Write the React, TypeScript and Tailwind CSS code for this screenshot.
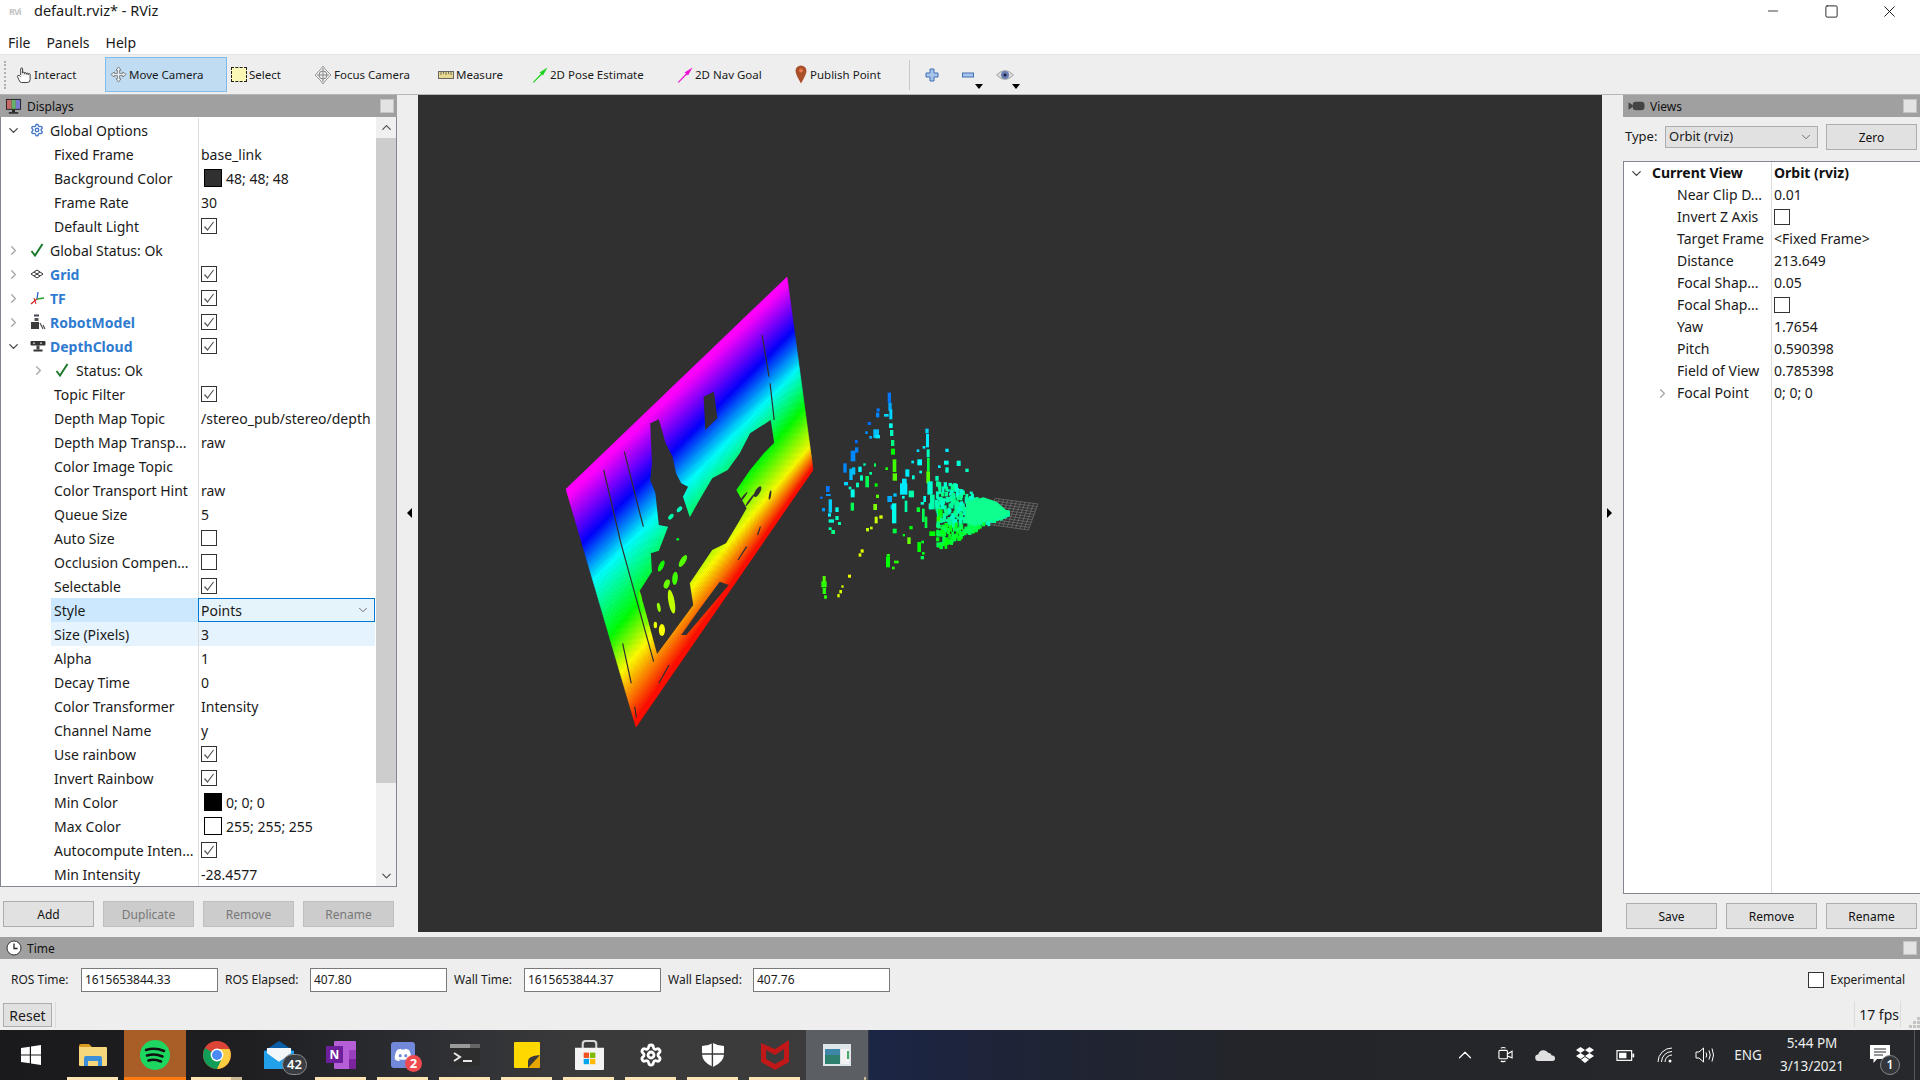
import React from 'react';
import { Settings, Minus, Square, X, ChevronUp, ChevronDown, ChevronRight } from 'lucide-react';
import { FaDiscord } from 'react-icons/fa';

type TreeRow = {
    label: string;
    value?: string;
    check?: boolean;
    swatch?: string;
    expand?: 'open' | 'closed';
    icon?: React.ReactNode;
    blue?: boolean;
    nested?: boolean;
    state?: 'style' | 'size';
};

const Chevron = ({ open }: { open: boolean }) =>
    open ? (
        <ChevronDown className="w-[15px] h-[15px] text-[#444]" strokeWidth={2} />
    ) : (
        <ChevronRight className="w-[15px] h-[15px] text-[#a6a6a6]" strokeWidth={2} />
    );

const StatusTick = () => (
    <svg viewBox="0 0 14 14" className="w-[14px] h-[14px]">
        <path d="M1.5 8 L5 12.5 L12.5 1" fill="none" stroke="#1d7a2c" strokeWidth="2" />
    </svg>
);

const GridIcon = () => (
    <svg viewBox="0 0 14 14" className="w-[14px] h-[14px]">
        <path d="M1 7 L7 3 L13 7 L7 11 Z M4 5 L10 9 M10 5 L4 9" fill="none" stroke="#333" strokeWidth="1" />
    </svg>
);

const TfIcon = () => (
    <svg viewBox="0 0 16 16" className="w-[16px] h-[16px]">
        <path d="M7 9 L8 2" stroke="#2a5fd0" strokeWidth="1.3" />
        <path d="M7 9 L14 8" stroke="#27a02a" strokeWidth="1.3" />
        <path d="M7 9 L1 14" stroke="#d02a2a" strokeWidth="1.3" />
        <path d="M4 8 L6 14" stroke="#d02a2a" strokeWidth="1" />
    </svg>
);

const RobotIcon = () => (
    <svg viewBox="0 0 16 16" className="w-[16px] h-[16px]">
        <rect x="4" y="0.5" width="5" height="2" fill="#445" />
        <rect x="4.5" y="4" width="4" height="3" fill="#555" />
        <rect x="1" y="8" width="8" height="7" fill="#3d3d3d" />
        <path d="M10 9 L13 15 M13 11 L15 15" stroke="#555" strokeWidth="1.2" />
    </svg>
);

const DepthIcon = () => (
    <svg viewBox="0 0 16 14" className="w-[16px] h-[14px]">
        <rect x="0.5" y="2" width="15" height="4.5" rx="1" fill="#333" />
        <circle cx="4" cy="4.2" r="1" fill="#bbb" />
        <circle cx="11" cy="4.2" r="1" fill="#bbb" />
        <rect x="6.5" y="6.5" width="3" height="4" fill="#444" />
        <rect x="3.5" y="10.5" width="9" height="2" fill="#333" />
    </svg>
);

const displayRows: TreeRow[] = [
    { label: 'Global Options', expand: 'open', icon: <Settings className="w-[14px] h-[14px] text-[#4a78c8]" strokeWidth={2.4} /> },
    { label: 'Fixed Frame', value: 'base_link' },
    { label: 'Background Color', value: '48; 48; 48', swatch: '#303030' },
    { label: 'Frame Rate', value: '30' },
    { label: 'Default Light', check: true },
    { label: 'Global Status: Ok', expand: 'closed', icon: <StatusTick /> },
    { label: 'Grid', expand: 'closed', icon: <GridIcon />, blue: true, check: true },
    { label: 'TF', expand: 'closed', icon: <TfIcon />, blue: true, check: true },
    { label: 'RobotModel', expand: 'closed', icon: <RobotIcon />, blue: true, check: true },
    { label: 'DepthCloud', expand: 'open', icon: <DepthIcon />, blue: true, check: true },
    { label: 'Status: Ok', nested: true, expand: 'closed', icon: <StatusTick /> },
    { label: 'Topic Filter', check: true },
    { label: 'Depth Map Topic', value: '/stereo_pub/stereo/depth' },
    { label: 'Depth Map Transp...', value: 'raw' },
    { label: 'Color Image Topic' },
    { label: 'Color Transport Hint', value: 'raw' },
    { label: 'Queue Size', value: '5' },
    { label: 'Auto Size', check: false },
    { label: 'Occlusion Compen...', check: false },
    { label: 'Selectable', check: true },
    { label: 'Style', value: 'Points', state: 'style' },
    { label: 'Size (Pixels)', value: '3', state: 'size' },
    { label: 'Alpha', value: '1' },
    { label: 'Decay Time', value: '0' },
    { label: 'Color Transformer', value: 'Intensity' },
    { label: 'Channel Name', value: 'y' },
    { label: 'Use rainbow', check: true },
    { label: 'Invert Rainbow', check: true },
    { label: 'Min Color', value: '0; 0; 0', swatch: '#000000' },
    { label: 'Max Color', value: '255; 255; 255', swatch: '#ffffff' },
    { label: 'Autocompute Inten...', check: true },
    { label: 'Min Intensity', value: '-28.4577' },
];

const viewRows: TreeRow[] = [
    { label: 'Near Clip D...', value: '0.01' },
    { label: 'Invert Z Axis', check: false },
    { label: 'Target Frame', value: '<Fixed Frame>' },
    { label: 'Distance', value: '213.649' },
    { label: 'Focal Shap...', value: '0.05' },
    { label: 'Focal Shap...', check: false },
    { label: 'Yaw', value: '1.7654' },
    { label: 'Pitch', value: '0.590398' },
    { label: 'Field of View', value: '0.785398' },
    { label: 'Focal Point', value: '0; 0; 0', expand: 'closed' },
];

const CheckBox = ({ checked }: { checked?: boolean }) => (
    <div className="w-[16px] h-[16px] border border-[#333] bg-white flex items-center justify-center">
        {checked && (
            <svg viewBox="0 0 14 14" className="w-[14px] h-[14px]">
                <path d="M2.5 7.5 L5.5 11 L11.5 3" fill="none" stroke="#555" strokeWidth="1.2" />
            </svg>
        )}
    </div>
);

const DisplayRow = ({ row }: { row: TreeRow }) => {
    const nameBg = row.state === 'style' ? 'bg-[#cce8ff]' : row.state === 'size' ? 'bg-[#e5f3ff]' : '';
    const valueCls =
        row.state === 'style'
            ? 'bg-[#e5f3fb] border border-[#0078d7]'
            : row.state === 'size'
              ? 'bg-[#e5f3ff] border-l border-[#dcdcdc]'
              : 'border-l border-[#dcdcdc]';
    return (
        <div className="flex h-[24px] items-stretch">
            <div className="w-[197px] shrink-0 flex items-center whitespace-nowrap">
                {row.expand && !row.nested && (
                    <span className="w-[25px] flex justify-center">
                        <Chevron open={row.expand === 'open'} />
                    </span>
                )}
                {row.nested && (
                    <span className="w-[26px] ml-[24px] flex justify-center">
                        <Chevron open={false} />
                    </span>
                )}
                {row.icon ? (
                    <span className={row.nested ? 'w-[25px] flex pl-[4px]' : 'w-[24px] flex pl-[4px]'}>{row.icon}</span>
                ) : null}
                <div className={`${row.expand ? '' : 'ml-[50px] pl-[3px] h-full w-[147px]'} ${nameBg} flex items-center ${row.blue ? 'font-bold text-[#2f7bd0]' : ''}`}>
                    <span className="pt-[2px]">{row.label}</span>
                </div>
            </div>
            <div className={`w-[177px] shrink-0 flex items-center pl-[2px] relative ${valueCls}`}>
                {row.check !== undefined && <CheckBox checked={row.check} />}
                {row.swatch && (
                    <span className="w-[18px] h-[18px] ml-[3px] mr-[4px] border border-black" style={{ backgroundColor: row.swatch }} />
                )}
                {row.value && <span className="whitespace-nowrap pt-[2px]">{row.value}</span>}
                {row.state === 'style' && (
                    <ChevronDown className="absolute right-[4px] w-[14px] h-[14px] text-[#555]" strokeWidth={1.4} />
                )}
            </div>
        </div>
    );
};

const ViewRow = ({ row }: { row: TreeRow }) => (
    <div className="flex h-[22px] items-stretch">
        <div className="w-[147px] shrink-0 flex items-center whitespace-nowrap pl-[53px] relative">
            {row.expand && (
                <span className="absolute left-[31px]">
                    <Chevron open={false} />
                </span>
            )}
            {row.label}
        </div>
        <div className="flex-1 border-l border-[#dcdcdc] flex items-center pl-[2px] whitespace-nowrap">
            {row.check !== undefined ? <CheckBox checked={row.check} /> : row.value}
        </div>
    </div>
);

const QtButton = ({ label, disabled, className }: { label: string; disabled?: boolean; className?: string }) => (
    <div
        className={`w-[91px] h-[26px] border flex items-center justify-center text-[12px] pt-[1px] ${
            disabled ? 'bg-[#cccccc] border-[#bfbfbf] text-[#787878]' : 'bg-[#e1e1e1] border-[#adadad] text-[#111]'
        } ${className ?? ''}`}
    >
        {label}
    </div>
);

const DockHeader = ({ icon, title }: { icon: React.ReactNode; title: string }) => (
    <div className="h-[22px] bg-[#a0a0a0] flex items-center shrink-0 text-[12px] text-[#111]">
        <span className="w-[27px] flex justify-center">{icon}</span>
        <span className="pt-[2px]">{title}</span>
        <span className="ml-auto mr-[3px] w-[14px] h-[14px] bg-[#e3e3e3] border border-[#c4c4c4]" />
    </div>
);

const ToolButton = ({ icon, label, className }: { icon: React.ReactNode; label: string; className: string }) => (
    <div className={`flex items-center h-[35px] whitespace-nowrap ${className}`}>
        <span className="flex justify-center shrink-0">{icon}</span>
        <span className="ml-[2px]">{label}</span>
    </div>
);

// --- 3D view -----------------------------------------------------------------

const hueStops = [
    [300, 0.03, 0.03],
    [240, 0.227, 0.27],
    [180, 0.38, 0.466],
    [120, 0.62, 0.67],
    [60, 0.77, 0.88],
    [0, 0.985, 0.99],
];

const sideAt = (hue: number, idx: 1 | 2) => {
    for (let i = 0; i < hueStops.length - 1; i++) {
        const a = hueStops[i];
        const b = hueStops[i + 1];
        if (hue <= a[0] && hue >= b[0]) {
            return a[idx] + ((a[0] - hue) / (a[0] - b[0])) * (b[idx] - a[idx]);
        }
    }
    return 0;
};

const lerp = (a: number[], b: number[], t: number) => [a[0] + (b[0] - a[0]) * t, a[1] + (b[1] - a[1]) * t];

const L = [566, 489];
const B = [636, 727];
const T = [787, 277];
const R = [813, 470];

const rainbowStrips = () => {
    const out: React.ReactNode[] = [];
    const edge = (hue: number) => [sideAt(hue, 1), sideAt(hue, 2)];
    for (let h = 303; h > 0; h -= 3) {
        const from = h > 300 ? [0, 0] : edge(h);
        const to = h - 3 <= 0 ? [1, 1] : edge(h - 3);
        const p = [lerp(L, B, from[0]), lerp(T, R, from[1]), lerp(T, R, to[1]), lerp(L, B, to[0])];
        const color = `hsl(${Math.min(h, 300)},100%,50%)`;
        out.push(<polygon key={h} points={p.map((q) => q.join(',')).join(' ')} fill={color} stroke={color} strokeWidth="0.6" />);
    }
    return out;
};

const holes = [
    '320,490 345,478 365,550 385,590 395,640 410,670 430,680 415,710 435,772 460,725 480,690 500,655 545,630 580,580 610,520 670,480 680,548 650,580 610,630 570,690 600,745 575,790 540,850 500,870 435,970 445,1035 340,1182 300,1030 285,1000 325,935 322,880 345,872 372,800 345,795 335,700 320,660 325,610',
    '475,410 505,395 515,475 480,510',
    '465,1045 522,965 548,975 425,1125 410,1125',
];

const seams: number[][] = [
    [185, 630, 235, 850, 330, 1205],
    [245, 575, 285, 740, 300, 800],
    [645, 225, 665, 350],
    [668, 370, 680, 480],
    [240, 1150, 265, 1270],
    [275, 1340, 280, 1372],
    [345, 1270, 375, 1215],
    [600, 860, 575, 900],
    [632, 825, 640, 800],
];

// [x, y, rx, ry, hue, rotation] scraps left standing inside the big hole
const scraps: number[][] = [
    [352, 918, 7, 18, 115, 25],
    [415, 903, 8, 20, 100, 30],
    [392, 955, 8, 20, 105, 5],
    [368, 972, 8, 14, 95, 20],
    [382, 1025, 9, 36, 75, -10],
    [345, 1042, 5, 14, 85, -10],
    [354, 1110, 9, 18, 62, 0],
    [335, 1095, 5, 10, 66, 0],
    [292, 1020, 5, 28, 105, -10],
    [305, 1075, 4, 22, 95, -15],
    [400, 838, 4, 4, 130, 0],
    [380, 770, 6, 10, 160, 40],
    [405, 748, 6, 10, 165, 40],
];

// dark gaps in the coloured band below the hole
const gaps: number[][] = [
    [632, 695, 7, 18, 30],
    [610, 720, 3, 24, 35],
    [590, 712, 3, 20, 38],
    [668, 705, 3, 14, 10],
];

type Streak = [number, number, number, number, number];

// streaks read off the point cloud: x, y, w, h, hue
const cloud: Streak[] = [
    [233, 8, 10, 30, 212], [235, 38, 10, 24, 200], [238, 58, 9, 30, 190], [222, 72, 14, 8, 190],
    [200, 55, 9, 10, 212], [198, 68, 10, 14, 208], [173, 96, 10, 9, 215], [237, 100, 11, 14, 175],
    [240, 120, 10, 18, 165], [166, 124, 7, 8, 205], [190, 118, 17, 26, 195], [196, 135, 14, 10, 185],
    [178, 138, 8, 8, 200], [135, 150, 8, 10, 215], [243, 150, 10, 18, 150], [243, 176, 12, 18, 120],
    [135, 172, 10, 16, 210], [122, 182, 14, 32, 208], [248, 208, 11, 38, 105], [100, 220, 10, 28, 208],
    [248, 250, 13, 22, 100], [192, 220, 6, 10, 140], [160, 220, 7, 7, 165], [226, 232, 8, 8, 115],
    [145, 230, 10, 16, 180], [118, 236, 10, 34, 195], [126, 232, 10, 22, 195], [178, 246, 8, 8, 155],
    [150, 256, 9, 16, 165], [166, 258, 11, 34, 140], [102, 276, 12, 10, 190], [194, 280, 9, 10, 120],
    [138, 278, 9, 14, 165], [116, 290, 8, 8, 170], [122, 298, 12, 24, 175], [48, 288, 11, 18, 212],
    [30, 320, 8, 6, 212], [48, 312, 14, 6, 205], [198, 314, 9, 10, 100], [232, 318, 14, 18, 200],
    [250, 310, 10, 10, 195], [56, 328, 10, 40, 192], [122, 338, 10, 24, 140], [190, 342, 11, 18, 90],
    [242, 344, 10, 14, 195], [246, 340, 13, 60, 175], [36, 354, 9, 10, 205], [76, 352, 10, 14, 175],
    [54, 370, 9, 10, 182], [194, 380, 9, 20, 72], [208, 376, 10, 10, 70], [76, 378, 10, 12, 165],
    [56, 388, 16, 10, 170], [84, 396, 9, 9, 160], [56, 412, 9, 8, 160], [64, 420, 11, 12, 150],
    [168, 414, 9, 10, 75], [180, 410, 8, 8, 75], [248, 416, 12, 14, 135], [298, 408, 10, 10, 120],
    [278, 432, 7, 7, 125], [292, 442, 10, 20, 95], [322, 456, 11, 30, 120], [334, 452, 8, 8, 130],
    [336, 486, 8, 8, 125], [332, 498, 10, 10, 140], [152, 478, 9, 10, 65], [146, 490, 8, 10, 68],
    [230, 492, 10, 8, 115], [228, 500, 12, 32, 120], [252, 512, 14, 8, 110], [246, 530, 8, 8, 110],
    [114, 554, 9, 9, 65], [38, 558, 9, 18, 100], [34, 574, 16, 18, 110], [38, 594, 10, 18, 110],
    [42, 616, 9, 10, 110], [94, 586, 7, 7, 72], [88, 600, 8, 10, 70], [82, 612, 7, 10, 68],
    [270, 280, 22, 34, 185], [276, 266, 14, 16, 185], [286, 238, 12, 22, 185], [276, 318, 8, 8, 175],
    [304, 212, 8, 8, 185], [322, 208, 14, 18, 180], [306, 256, 8, 12, 170], [296, 302, 16, 20, 160],
    [284, 332, 8, 34, 160], [346, 116, 10, 14, 190], [348, 132, 9, 40, 185], [350, 178, 9, 24, 165],
    [351, 204, 8, 40, 135], [349, 244, 11, 36, 100], [320, 178, 8, 8, 190], [338, 168, 8, 8, 185],
    [328, 242, 8, 8, 175], [406, 176, 10, 10, 185], [402, 212, 14, 12, 175], [384, 226, 8, 8, 185],
    [440, 212, 12, 16, 170], [406, 232, 10, 16, 170], [466, 236, 10, 10, 165], [352, 274, 16, 40, 170],
    [340, 318, 8, 18, 175], [332, 336, 10, 8, 170], [360, 314, 14, 44, 160], [320, 352, 10, 14, 130],
    [336, 356, 8, 40, 140], [344, 380, 8, 34, 135], [384, 358, 14, 24, 125], [356, 340, 8, 18, 165],
    [380, 380, 10, 14, 110], [358, 424, 18, 14, 120], [390, 420, 12, 10, 125], [410, 414, 10, 18, 130],
    [378, 442, 10, 12, 125], [386, 464, 8, 10, 125], [420, 458, 9, 7, 130], [424, 424, 8, 10, 130],
    [444, 440, 10, 12, 125],
];

const rng = (seed: number) => () => {
    seed = (seed * 1664525 + 1013904223) >>> 0;
    return seed / 4294967296;
};

const coneStreaks = (): Streak[] => {
    const r = rng(42);
    const out: Streak[] = [];
    for (let i = 0; i < 420; i++) {
        const d = Math.pow(r(), 0.9);
        const x = 590 - d * 215;
        const half = d * 112;
        const y = 362 + (r() * 2 - 1) * half;
        const below = y > 395;
        const hue = below ? 122 + r() * 22 : 148 + r() * 22;
        out.push([x, y, 8 + r() * 3, 7 + r() * 14, hue]);
    }
    return out;
};

const groundGrid = () => {
    const a = [555, 325];
    const b = [684, 342];
    const c = [655, 420];
    const d = [528, 402];
    const lines: string[] = [];
    for (let i = 0; i <= 10; i++) {
        const t = i / 10;
        lines.push(`M${lerp(a, b, t).join(' ')} L${lerp(d, c, t).join(' ')}`);
        lines.push(`M${lerp(a, d, t).join(' ')} L${lerp(b, c, t).join(' ')}`);
    }
    return lines.join(' ');
};

const Viewport = () => (
    <div className="flex-1 bg-[#303030]">
        <svg viewBox="418 95 1184 837" className="w-full h-full block">
            {rainbowStrips()}
            <g transform="translate(540 260) scale(0.34439 0.33333)">
                {holes.map((points) => (
                    <polygon key={points} points={points} fill="#303030" />
                ))}
                {seams.map((s) => (
                    <polyline key={s.join()} points={s.join(' ')} fill="none" stroke="#303030" strokeWidth="3.5" />
                ))}
                {gaps.map(([x, y, rx, ry, rot]) => (
                    <ellipse key={`${x}-${y}`} cx={x} cy={y} rx={rx} ry={ry} fill="#303030" transform={`rotate(${rot} ${x} ${y})`} />
                ))}
                {scraps.map(([x, y, rx, ry, hue, rot]) => (
                    <ellipse key={`${x}-${y}`} cx={x} cy={y} rx={rx} ry={ry} fill={`hsl(${hue},100%,50%)`} transform={`rotate(${rot} ${x} ${y})`} />
                ))}
            </g>
            <g transform="translate(810 390) scale(0.33333)">
                <path d={groundGrid()} fill="none" stroke="#777" strokeWidth="2" />
                {coneStreaks().map(([x, y, w, h, hue], i) => (
                    <rect key={i} x={x} y={y} width={w} height={h} fill={`hsl(${hue},100%,50%)`} />
                ))}
                <polygon points="470,335 520,322 560,335 594,365 575,385 530,395 495,408 462,398" fill="hsl(152,100%,53%)" />
                {cloud.map(([x, y, w, h, hue], i) => (
                    <rect key={i} x={x} y={y} width={w} height={h} fill={`hsl(${hue},100%,50%)`} />
                ))}
            </g>
        </svg>
    </div>
);

// --- toolbar icons -----------------------------------------------------------

const HandIcon = () => (
    <svg viewBox="0 0 17 18" className="w-[16px] h-[18px]">
        <path d="M5 9 V2.5 a1 1 0 0 1 2 0 V7 M7 7 a1 1 0 0 1 2 0 V8 M9 7.5 a1 1 0 0 1 2 0 V8.5 M11 8 a1 1 0 0 1 2 0 V9 M13 8.5 a1 1 0 0 1 2 0 V14 q0 3 -3 3 H6 q-2 0 -3 -3 L1.5 10.5 q0 -1.5 2 -1 L5 11" fill="#fff" stroke="#333" strokeWidth="1" />
    </svg>
);

const MoveIcon = () => (
    <svg viewBox="0 0 20 20" className="w-[17px] h-[19px]">
        <path d="M10 1 L13 5 H11.3 V8.7 H15 V7 L19 10 L15 13 V11.3 H11.3 V15 H13 L10 19 L7 15 H8.7 V11.3 H5 V13 L1 10 L5 7 V8.7 H8.7 V5 H7 Z" fill="#e6eef4" stroke="#777" strokeWidth="1" />
    </svg>
);

const SelectIcon = () => (
    <div className="w-[16px] h-[15px] bg-[#fbf7b5] border border-dashed border-[#222]" />
);

const FocusIcon = () => (
    <svg viewBox="0 0 18 20" className="w-[18px] h-[20px]">
        <path d="M9 1 L12 5 L17 10 L12 15 L9 19 L6 15 L1 10 L6 5 Z" fill="#eee" stroke="#999" strokeWidth="1" />
        <circle cx="9" cy="10" r="4" fill="none" stroke="#888" strokeWidth="1" />
        <path d="M9 3 V17 M3 10 H15" stroke="#888" strokeWidth="1" />
    </svg>
);

const RulerIcon = () => (
    <svg viewBox="0 0 16 8" className="w-[16px] h-[8px]">
        <rect x="0.5" y="0.5" width="15" height="7" fill="#e7d88f" stroke="#666" strokeWidth="1" />
        <path d="M3 1 V4 M5.5 1 V3 M8 1 V4 M10.5 1 V3 M13 1 V4" stroke="#555" strokeWidth="0.8" />
    </svg>
);

const ArrowIcon = ({ color }: { color: string }) => (
    <svg viewBox="0 0 16 16" className="w-[16px] h-[16px]">
        <path d="M0.5 15.5 L9 6.5 L7.5 5.5 L15.5 0.5 L11 8.5 L10 7.5 L2 15.5 Z" fill={color} />
    </svg>
);

const PinIcon = () => (
    <svg viewBox="0 0 12 19" className="w-[12px] h-[19px] mr-[1px]">
        <path d="M6 18.5 Q0.5 9 0.5 6 a5.5 5.5 0 0 1 11 0 Q11.5 9 6 18.5 Z" fill="#a9502a" />
        <circle cx="6" cy="5.5" r="2" fill="#e8764a" />
    </svg>
);

const DropArrow = () => (
    <span className="absolute w-0 h-0 border-l-[4px] border-r-[4px] border-t-[5px] border-l-transparent border-r-transparent border-t-black" />
);

const DisplaysIcon = () => (
    <svg viewBox="0 0 18 18" className="w-[17px] h-[17px]">
        <rect x="1" y="1" width="16" height="11.5" fill="#222" />
        <rect x="2" y="2" width="5" height="9.5" fill="#c86a6a" />
        <rect x="7" y="2" width="4.5" height="9.5" fill="#6ab06a" />
        <rect x="11.5" y="2" width="4.5" height="9.5" fill="#7a7ad0" />
        <rect x="7.5" y="12.5" width="3" height="2.5" fill="#222" />
        <rect x="4" y="15" width="10" height="1.6" fill="#222" />
    </svg>
);

const CameraIcon = () => (
    <svg viewBox="0 0 18 10" className="w-[17px] h-[10px]">
        <path d="M0.5 1 L5 4 V6 L0.5 9 Z" fill="#444" />
        <rect x="5" y="0.5" width="12.5" height="9" rx="3.5" fill="#444" />
    </svg>
);

const ClockIcon = () => (
    <svg viewBox="0 0 16 16" className="w-[16px] h-[16px]">
        <circle cx="8" cy="8" r="7" fill="#fff" stroke="#333" strokeWidth="1" />
        <path d="M8 3.5 V8.5 H11.5" fill="none" stroke="#222" strokeWidth="1.3" />
    </svg>
);

// --- taskbar icons -----------------------------------------------------------

const WinLogo = () => (
    <svg viewBox="0 0 20 20" className="w-[20px] h-[20px]">
        <path d="M0 3 L8.8 1.7 V9.4 H0 Z M10 1.5 L20 0 V9.4 H10 Z M0 10.6 H8.8 V18.3 L0 17 Z M10 10.6 H20 V20 L10 18.5 Z" fill="#fff" />
    </svg>
);

const FolderIcon = () => (
    <svg viewBox="0 0 28 24" className="w-[28px] h-[24px]">
        <path d="M0 3 Q0 1 2 1 H10 L13 4 H0 Z" fill="#dc9a22" />
        <path d="M0 4 H27 Q28 4 28 5 V22 Q28 23 27 23 H1 Q0 23 0 22 Z" fill="#f7d77c" />
        <path d="M5 23 V15 Q5 13 7 13 H21 Q23 13 23 15 V23 H19 V18 H9 V23 Z" fill="#3b8fd8" />
    </svg>
);

const SpotifyIcon = () => (
    <svg viewBox="0 0 30 30" className="w-[30px] h-[30px]">
        <circle cx="15" cy="15" r="15" fill="#1ed760" />
        <path d="M6 10 Q15 7 24 11 M7 15.5 Q15 13 22.5 16.5 M8.5 20.5 Q15 18.5 21 21.5" fill="none" stroke="#111" strokeWidth="2.6" strokeLinecap="round" />
    </svg>
);

const ChromeIcon = () => (
    <svg viewBox="0 0 28 28" className="w-[28px] h-[28px]">
        <circle cx="14" cy="14" r="14" fill="#db4437" />
        <path d="M14 14 L2 7 A14 14 0 0 0 14 28 L21 16 Z" fill="#0f9d58" />
        <path d="M14 8 H26.5 A14 14 0 0 1 14 28 L20 15 Z" fill="#ffcd40" />
        <circle cx="14" cy="14" r="6.4" fill="#fff" />
        <circle cx="14" cy="14" r="5" fill="#4a8af4" />
    </svg>
);

const MailIcon = () => (
    <svg viewBox="0 0 30 28" className="w-[30px] h-[28px]">
        <path d="M0 10 L15 0 L30 10 Z" fill="#0a5ea8" />
        <rect x="0" y="10" width="30" height="18" fill="#2ea8ef" />
        <path d="M3 7 H27 V13 L15 21 L3 13 Z" fill="#f4f7fa" />
        <path d="M0 10 L15 21 L30 10 V28 H0 Z" fill="#22a0ea" />
    </svg>
);

const OneNoteIcon = () => (
    <div className="relative w-[30px] h-[28px]">
        <div className="absolute left-[8px] top-0 w-[22px] h-[28px] bg-[#b45fd6] rounded-[1px]">
            <div className="absolute right-0 top-[9px] w-[7px] h-[9px] bg-[#9a3fc0]" />
            <div className="absolute right-0 top-[18px] w-[7px] h-[10px] bg-[#7a249e]" />
        </div>
        <div className="absolute left-0 top-[5px] w-[17px] h-[17px] bg-[#6d1f9c] flex items-center justify-center text-white text-[12px] font-bold leading-none">N</div>
    </div>
);

const DiscordIcon = () => (
    <div className="w-[24px] h-[26px] bg-[#7289da] rounded-[3px] flex items-center justify-center">
        <FaDiscord className="w-[18px] h-[18px] text-white" />
    </div>
);

const TerminalIcon = () => (
    <svg viewBox="0 0 30 22" className="w-[30px] h-[22px]">
        <rect x="0" y="0" width="30" height="22" rx="1.5" fill="#2e2e2e" />
        <rect x="0" y="0" width="20" height="4" fill="#9a9a9a" />
        <rect x="20" y="0" width="10" height="4" fill="#666" />
        <path d="M4 9 L10 13 L4 17" fill="none" stroke="#e8e8e8" strokeWidth="2" />
        <rect x="13" y="16" width="9" height="2" fill="#e8e8e8" />
    </svg>
);

const StickyIcon = () => (
    <svg viewBox="0 0 26 26" className="w-[26px] h-[26px]">
        <path d="M1 0 H25 Q26 0 26 1 V15 L15 26 H1 Q0 26 0 25 V1 Q0 0 1 0 Z" fill="#ffd800" />
        <path d="M26 14 V25 Q26 26 25 26 H14 V19 L19 14 Z" fill="#e6a800" />
        <path d="M14 26 V19 Q14 14 26 13 Z" fill="#3a3a3a" />
    </svg>
);

const StoreIcon = () => (
    <svg viewBox="0 0 30 32" className="w-[29px] h-[31px]">
        <path d="M8 9 V4 Q8 1 11 1 H19 Q22 1 22 4 V9" fill="none" stroke="#d5d5d5" strokeWidth="2.2" />
        <path d="M0 8 H30 V30 Q30 31 29 31 H1 Q0 31 0 30 Z" fill="#f3f3f3" />
        <rect x="9" y="13" width="5.5" height="5.5" fill="#f25022" />
        <rect x="15.5" y="13" width="5.5" height="5.5" fill="#7fba00" />
        <rect x="9" y="19.5" width="5.5" height="5.5" fill="#00a4ef" />
        <rect x="15.5" y="19.5" width="5.5" height="5.5" fill="#ffb900" />
    </svg>
);

const ShieldIcon = () => (
    <svg viewBox="0 0 22 24" className="w-[22px] h-[24px]">
        <path d="M11 0 Q16 3 22 3 V11 Q22 19 11 24 Q0 19 0 11 V3 Q6 3 11 0 Z" fill="#fff" />
        <path d="M10.4 0 V24 M0 11 H22" stroke="#3a3a3a" strokeWidth="1.4" />
    </svg>
);

const McafeeIcon = () => (
    <svg viewBox="0 0 28 30" className="w-[28px] h-[30px]">
        <path d="M0 3 L14 9 L28 0 V22 L14 30 L0 22 Z M5 10 V19 L14 24 L23 19 V9 L14 15 Z" fill="#c01818" fillRule="evenodd" />
    </svg>
);

const RvizWindowIcon = () => (
    <svg viewBox="0 0 28 22" className="w-[28px] h-[22px]">
        <rect width="28" height="22" fill="#dfe6ea" />
        <rect x="2" y="5" width="15" height="15" fill="#2f7f6f" />
        <rect x="2" y="5" width="15" height="6" fill="#3d86a8" />
        <rect x="18" y="5" width="8" height="15" fill="#f2f2f2" />
        <rect x="24" y="7" width="2" height="8" fill="#46a86c" />
    </svg>
);

const taskItems: { icon: React.ReactNode; bar?: 'cream' | 'tan' | 'spotify' | 'active'; badge?: string; badgeClass?: string }[] = [
    { icon: <WinLogo /> },
    { icon: <FolderIcon />, bar: 'cream' },
    { icon: <SpotifyIcon />, bar: 'spotify' },
    { icon: <ChromeIcon />, bar: 'tan' },
    { icon: <MailIcon />, badge: '42', badgeClass: 'left-[34px] top-[24px] w-[25px] h-[21px] bg-[#3a3d42] border border-[#8d8d8d] rounded-full font-semibold' },
    { icon: <OneNoteIcon />, bar: 'cream' },
    { icon: <DiscordIcon />, bar: 'cream', badge: '2', badgeClass: 'left-[33px] top-[25px] w-[17px] h-[17px] bg-[#ee4b4f] rounded-full font-bold' },
    { icon: <TerminalIcon />, bar: 'cream' },
    { icon: <StickyIcon />, bar: 'cream' },
    { icon: <StoreIcon />, bar: 'cream' },
    { icon: <Settings className="w-[24px] h-[24px] text-white" strokeWidth={2.8} />, bar: 'cream' },
    { icon: <ShieldIcon />, bar: 'cream' },
    { icon: <McafeeIcon />, bar: 'cream' },
    { icon: <RvizWindowIcon />, bar: 'active' },
];

const TaskCell = ({ item }: { item: (typeof taskItems)[number] }) => {
    const bg = item.bar === 'spotify' ? 'bg-[#a85e26]' : item.bar === 'active' ? 'bg-[#5b5e63]' : '';
    return (
        <div className={`relative w-[62px] h-[50px] flex items-center justify-center ${bg}`}>
            {item.icon}
            {item.badge && (
                <span className={`absolute flex items-center justify-center text-white text-[13px] leading-none ${item.badgeClass}`}>{item.badge}</span>
            )}
            {item.bar === 'cream' && <span className="absolute bottom-0 left-[5px] w-[51px] h-[3px] bg-[#fde4b5]" />}
            {item.bar === 'tan' && (
                <span className="absolute bottom-0 left-[5px] w-[51px] h-[3px] bg-[linear-gradient(90deg,#fde4b5_78%,#c9b894_78%)]" />
            )}
            {item.bar === 'spotify' && <span className="absolute bottom-0 left-0 w-full h-[3px] bg-[#ff7a10]" />}
            {item.bar === 'active' && <span className="absolute bottom-0 right-[2px] w-[2px] h-[3px] bg-[#c9b894]" />}
        </div>
    );
};

const TimeField = ({ label, value, labelWidth }: { label: string; value: string; labelWidth: string }) => (
    <>
        <span className={`${labelWidth} whitespace-nowrap`}>{label}</span>
        <div className="w-[137px] h-[24px] bg-white border border-[#7a7a7a] flex items-center pl-[3px] mr-[7px]">{value}</div>
    </>
);

const App: React.FC = () => {
    return (
        <div className="w-[1920px] h-[1080px] overflow-hidden flex flex-col bg-[#eeeeee] text-[#1a1a1a] [font-family:'Noto_Sans',sans-serif]">
            {/* Title bar */}
            <div className="h-[22px] bg-white flex items-center shrink-0 relative">
                <span className="ml-[9px] w-[20px] text-[9px] text-[#c4c4c4] font-bold leading-none tracking-[-1px]">RVi</span>
                <span className="ml-[5px] text-[14.5px]">default.rviz* - RViz</span>
                <div className="ml-auto flex items-center text-[#111]">
                    <span className="w-[58px] flex justify-center"><Minus className="w-[16px] h-[16px]" strokeWidth={1.2} /></span>
                    <span className="w-[58px] flex justify-center"><Square className="w-[15px] h-[15px]" strokeWidth={1.4} /></span>
                    <span className="w-[58px] flex justify-center mr-[2px]"><X className="w-[19px] h-[19px]" strokeWidth={1.2} /></span>
                </div>
            </div>

            {/* Menu bar */}
            <div className="h-[32px] bg-white flex items-center shrink-0 text-[14px] pl-[8px] pt-[8px] gap-[16px]">
                <span>File</span>
                <span>Panels</span>
                <span>Help</span>
            </div>

            {/* Toolbar */}
            <div className="h-[41px] bg-[#eeeeee] border-t border-[#e3e3e3] border-b border-b-[#b5b5b5] flex items-center shrink-0 text-[11.5px] relative">
                <div className="ml-[4px] w-[2px] h-[28px] border-l-2 border-dotted border-[#b0b0b0]" />
                <ToolButton icon={<HandIcon />} label="Interact" className="ml-[10px] w-[89px]" />
                <ToolButton
                    icon={<MoveIcon />}
                    label="Move Camera"
                    className="w-[122px] bg-[#bfdcf3] border border-[#80bbeb] pl-[4px]"
                />
                <ToolButton icon={<SelectIcon />} label="Select" className="ml-[4px] w-[83px]" />
                <ToolButton icon={<FocusIcon />} label="Focus Camera" className="w-[124px]" />
                <ToolButton icon={<RulerIcon />} label="Measure" className="w-[94px]" />
                <ToolButton icon={<ArrowIcon color="#1fd21f" />} label="2D Pose Estimate" className="w-[145px]" />
                <ToolButton icon={<ArrowIcon color="#f014d2" />} label="2D Nav Goal" className="w-[118px]" />
                <ToolButton icon={<PinIcon />} label="Publish Point" className="w-[114px]" />
                <div className="w-px h-[30px] bg-[#c8c8c8]" />
                <div className="ml-[15px] w-[14px] h-[14px] relative flex items-center justify-center">
                    <svg viewBox="0 0 14 14" className="w-[14px] h-[14px]">
                        <path d="M5 1 H9 V5 H13 V9 H9 V13 H5 V9 H1 V5 H5 Z" fill="#a9c4ea" stroke="#3f6fb5" strokeWidth="1" />
                    </svg>
                </div>
                <div className="ml-[22px] w-[14px] h-[14px] relative flex items-center justify-center">
                    <svg viewBox="0 0 14 14" className="w-[14px] h-[14px]">
                        <rect x="1.5" y="5" width="11" height="4" fill="#a9c4ea" stroke="#3f6fb5" strokeWidth="1" />
                    </svg>
                    <span className="absolute left-[14px] top-[16px]"><DropArrow /></span>
                </div>
                <div className="ml-[21px] w-[18px] h-[14px] relative flex items-center justify-center">
                    <svg viewBox="0 0 18 12" className="w-[18px] h-[12px]">
                        <path d="M0.5 6 Q9 -3 17.5 6 Q9 15 0.5 6 Z" fill="#d8d8d8" stroke="#999" strokeWidth="0.8" />
                        <circle cx="9" cy="6" r="4" fill="#6a7fb5" />
                        <circle cx="9" cy="6" r="1.6" fill="#1c2340" />
                    </svg>
                    <span className="absolute left-[16px] top-[16px]"><DropArrow /></span>
                </div>
            </div>

            {/* Docks and 3D view */}
            <div className="h-[837px] flex shrink-0">
                {/* Displays */}
                <div className="w-[397px] shrink-0 flex flex-col">
                    <DockHeader icon={<DisplaysIcon />} title="Displays" />
                    <div className="h-[770px] bg-white border border-t-0 border-[#828790] flex relative text-[14px] leading-none overflow-hidden">
                        <div className="w-[375px] shrink-0 overflow-hidden pt-[1px]">
                            {displayRows.map((row, i) => (
                                <DisplayRow key={i} row={row} />
                            ))}
                        </div>
                        <div className="w-[20px] shrink-0 bg-[#f0f0f0] flex flex-col items-center">
                            <ChevronUp className="w-[15px] h-[21px] text-[#555] shrink-0" strokeWidth={2} />
                            <div className="w-full h-[645px] bg-[#cdcdcd]" />
                            <div className="flex-1" />
                            <ChevronDown className="w-[15px] h-[20px] text-[#555] shrink-0" strokeWidth={2} />
                        </div>
                    </div>
                    <div className="flex gap-[9px] ml-[3px] mt-[14px]">
                        <QtButton label="Add" />
                        <QtButton label="Duplicate" disabled />
                        <QtButton label="Remove" disabled />
                        <QtButton label="Rename" disabled />
                    </div>
                </div>

                <div className="w-[21px] shrink-0 flex items-center justify-center pb-[1px] pl-[3px]">
                    <span className="w-0 h-0 border-y-[5px] border-r-[5px] border-y-transparent border-r-black" />
                </div>

                <Viewport />

                <div className="w-[21px] shrink-0 flex items-center justify-center pb-[1px] pr-[6px]">
                    <span className="w-0 h-0 border-y-[5px] border-l-[5px] border-y-transparent border-l-black" />
                </div>

                {/* Views */}
                <div className="w-[297px] shrink-0 flex flex-col">
                    <DockHeader icon={<CameraIcon />} title="Views" />
                    <div className="h-[40px] flex items-center shrink-0 text-[13px]">
                        <span className="ml-[2px] w-[40px]">Type:</span>
                        <div className="w-[153px] h-[22px] bg-[#e1e1e1] border border-[#adadad] flex items-center pl-[3px]">
                            Orbit (rviz)
                            <ChevronDown className="ml-auto mr-[4px] w-[14px] h-[14px] text-[#555]" strokeWidth={1.4} />
                        </div>
                        <QtButton label="Zero" className="ml-[8px]" />
                    </div>
                    <div className="mt-[4px] h-[733px] bg-white border border-r-0 border-[#828790] text-[14px] leading-none overflow-hidden">
                        <div className="flex h-[22px] items-stretch font-bold text-[#111]">
                            <div className="w-[147px] shrink-0 flex items-center relative pl-[28px]">
                                <span className="absolute left-[5px]"><Chevron open /></span>
                                Current View
                            </div>
                            <div className="flex-1 border-l border-[#dcdcdc] flex items-center pl-[2px]">Orbit (rviz)</div>
                        </div>
                        {viewRows.map((row, i) => (
                            <ViewRow key={i} row={row} />
                        ))}
                        <div className="h-[600px] w-[148px] border-r border-[#dcdcdc]" />
                    </div>
                    <div className="flex gap-[9px] ml-[3px] mt-[9px]">
                        <QtButton label="Save" />
                        <QtButton label="Remove" />
                        <QtButton label="Rename" />
                    </div>
                </div>
            </div>

            {/* Time panel */}
            <div className="mt-[5px] shrink-0">
                <DockHeader icon={<ClockIcon />} title="Time" />
            </div>
            <div className="h-[41px] flex items-center pl-[11px] text-[12px] shrink-0 pt-[1px]">
                <TimeField label="ROS Time:" value="1615653844.33" labelWidth="w-[70px]" />
                <TimeField label="ROS Elapsed:" value="407.80" labelWidth="w-[85px]" />
                <TimeField label="Wall Time:" value="1615653844.37" labelWidth="w-[70px]" />
                <TimeField label="Wall Elapsed:" value="407.76" labelWidth="w-[85px]" />
                <div className="ml-auto mr-[15px] flex items-center gap-[6px] text-[12px]">
                    <CheckBox />
                    Experimental
                </div>
            </div>
            <div className="h-[30px] flex items-start shrink-0 relative">
                <div className="ml-[3px] mt-[3px] w-[49px] h-[24px] bg-[#e1e1e1] border border-[#adadad] flex items-center justify-center text-[14px]">Reset</div>
                <div className="ml-[3px] mt-[2px] w-px h-[26px] bg-[#dcdcdc]" />
                <div className="ml-auto mt-[1px] h-[26px] w-[47px] border-x border-[#dcdcdc] flex items-center justify-end pr-[1px] text-[14px] mr-[19px]">17 fps</div>
                <svg viewBox="0 0 11 11" className="absolute right-0 bottom-[2px] w-[11px] h-[11px]">
                    <path d="M8 0 h3 v3 h-3 Z M4 4 h3 v3 h-3 Z M8 4 h3 v3 h-3 Z M0 8 h3 v3 h-3 Z M4 8 h3 v3 h-3 Z M8 8 h3 v3 h-3 Z" fill="#c4c4c4" />
                </svg>
            </div>

            {/* Taskbar */}
            <div className="h-[50px] shrink-0 flex items-stretch bg-[linear-gradient(90deg,#1a1a1c_0%,#1f1f22_13%,#2c2e33_22%,#3a3a3b_30%,#3c3c3c_45%,#3c3c3c_45.2%,#1b2545_45.3%,#1e2438_52%,#232528_66%,#26282b_100%)] text-white">
                {taskItems.map((item, i) => (
                    <TaskCell key={i} item={item} />
                ))}
                <div className="ml-auto flex items-center">
                    <span className="w-[40px] flex justify-center"><ChevronUp className="w-[22px] h-[22px]" strokeWidth={1.3} /></span>
                    <span className="w-[40px] flex justify-center">
                        <svg viewBox="0 0 16 18" className="w-[15px] h-[18px]">
                            <rect x="1" y="4" width="9" height="9" rx="1" fill="none" stroke="#fff" strokeWidth="1.2" />
                            <path d="M10 8 L15 5 V12 L10 10 M3 1.5 Q6 0.5 8 1.5 M3 15.5 Q6 16.5 8 15.5" fill="none" stroke="#fff" strokeWidth="1.2" />
                        </svg>
                    </span>
                    <span className="w-[40px] flex justify-center">
                        <svg viewBox="0 0 22 14" className="w-[20px] h-[13px]">
                            <path d="M4 13 a3.5 3.5 0 0 1 -0.5 -7 a6 6 0 0 1 11 -2 a4.5 4.5 0 0 1 4 3 a3 3 0 0 1 1 6 Z" fill="#e0e0e0" />
                        </svg>
                    </span>
                    <span className="w-[40px] flex justify-center">
                        <svg viewBox="0 0 18 16" className="w-[18px] h-[16px]">
                            <path d="M4.5 0 L9 3 L4.5 6 L0 3 Z M13.5 0 L18 3 L13.5 6 L9 3 Z M4.5 6 L9 9 L4.5 12 L0 9 Z M13.5 6 L18 9 L13.5 12 L9 9 Z M9 10 L13 12.8 L9 16 L5 12.8 Z" fill="#fff" />
                        </svg>
                    </span>
                    <span className="w-[40px] flex justify-center">
                        <svg viewBox="0 0 20 12" className="w-[19px] h-[11px]">
                            <rect x="0.7" y="0.7" width="16" height="10.6" fill="none" stroke="#fff" strokeWidth="1.3" />
                            <rect x="3" y="3" width="8" height="6" fill="#fff" />
                            <rect x="17.5" y="4" width="2" height="4" fill="#fff" />
                        </svg>
                    </span>
                    <span className="w-[40px] flex justify-center">
                        <svg viewBox="0 0 16 16" className="w-[16px] h-[16px]">
                            <path d="M1 15 A14 14 0 0 1 15 1 M4.5 15 A10.5 10.5 0 0 1 15 4.5 M8 15 A7 7 0 0 1 15 8" fill="none" stroke="#fff" strokeWidth="1" />
                            <circle cx="13" cy="14" r="1.5" fill="#fff" />
                        </svg>
                    </span>
                    <span className="w-[40px] flex justify-center">
                        <svg viewBox="0 0 20 16" className="w-[20px] h-[16px]">
                            <path d="M1 5 H4 L8.5 1 V15 L4 11 H1 Z" fill="none" stroke="#fff" strokeWidth="1" />
                            <path d="M11 5.5 Q12.5 8 11 10.5 M14 3.5 Q16.5 8 14 12.5 M17 1.5 Q20 8 17 14.5" fill="none" stroke="#fff" strokeWidth="1" />
                        </svg>
                    </span>
                    <span className="w-[46px] text-center text-[13.5px] text-[#eee]">ENG</span>
                    <div className="w-[82px] flex flex-col items-center text-[13.5px] leading-[23px] text-[#eee]">
                        <span>5:44 PM</span>
                        <span>3/13/2021</span>
                    </div>
                    <div className="w-[61px] h-full relative">
                        <svg viewBox="0 0 20 18" className="absolute left-[17px] top-[15px] w-[20px] h-[18px]">
                            <path d="M0 0 H20 V14 H7 L3.5 18 V14 H0 Z" fill="#fff" />
                            <path d="M4 4 H16 M4 7 H16 M4 10 H13" stroke="#26282b" strokeWidth="1" />
                        </svg>
                        <span className="absolute left-[27px] top-[25px] w-[20px] h-[20px] rounded-full bg-[#33363a] border border-[#888] flex items-center justify-center text-[12px] font-semibold leading-none">1</span>
                    </div>
                    <div className="w-[6px] h-full border-l border-[#55585c]" />
                </div>
            </div>
        </div>
    );
};

export default App;
